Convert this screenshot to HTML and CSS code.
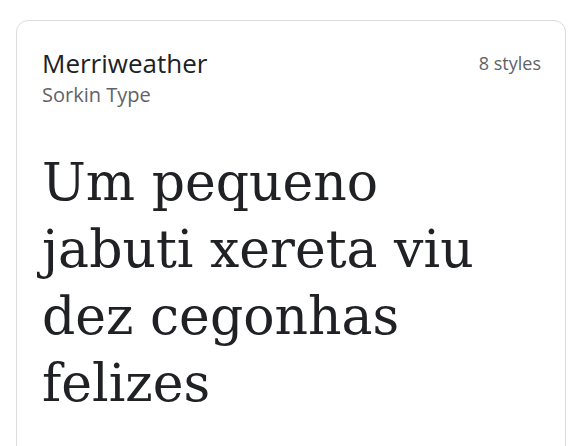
FILE: index.html
```html
<!DOCTYPE html>
<html>
<head>
<meta charset="utf-8">
<link rel="stylesheet" href="styles.css">
</head>
<body>
<div class="card">
  <div class="head">
    <div class="names">
      <div class="family">Merriweather</div>
      <div class="designer">Sorkin Type</div>
    </div>
    <div class="styles">8 styles</div>
  </div>
  <div class="sample">Um pequeno jabuti xereta viu dez cegonhas felizes</div>
</div>
</body>
</html>
```

FILE: styles.css
```css
html, body { margin: 0; padding: 0; background: #ffffff; }
body { padding: 20px 20px 0 16px; overflow: hidden; height: 446px; box-sizing: border-box; }
.card {
  border: 1px solid #dadce0;
  border-radius: 12px;
  padding: 24px 24px 40px 25px;
  height: 600px;
  box-sizing: border-box;
}
.head { display: flex; justify-content: space-between; align-items: flex-start; }
.family { font-family: "Open Sans", Roboto, sans-serif; font-size: 26px; line-height: 36px; color: #202124; }
.designer { font-family: "Open Sans", Roboto, sans-serif; font-size: 20px; line-height: 28px; color: #5f6368; }
.styles { font-family: "Open Sans", Roboto, sans-serif; font-size: 18px; line-height: 36px; color: #5f6368; }
.sample {
  margin-top: 40px;
  font-family: "DejaVu Serif", serif;
  font-size: 52px;
  line-height: 67px;
  color: #202124;
  width: 470px;
}
```
